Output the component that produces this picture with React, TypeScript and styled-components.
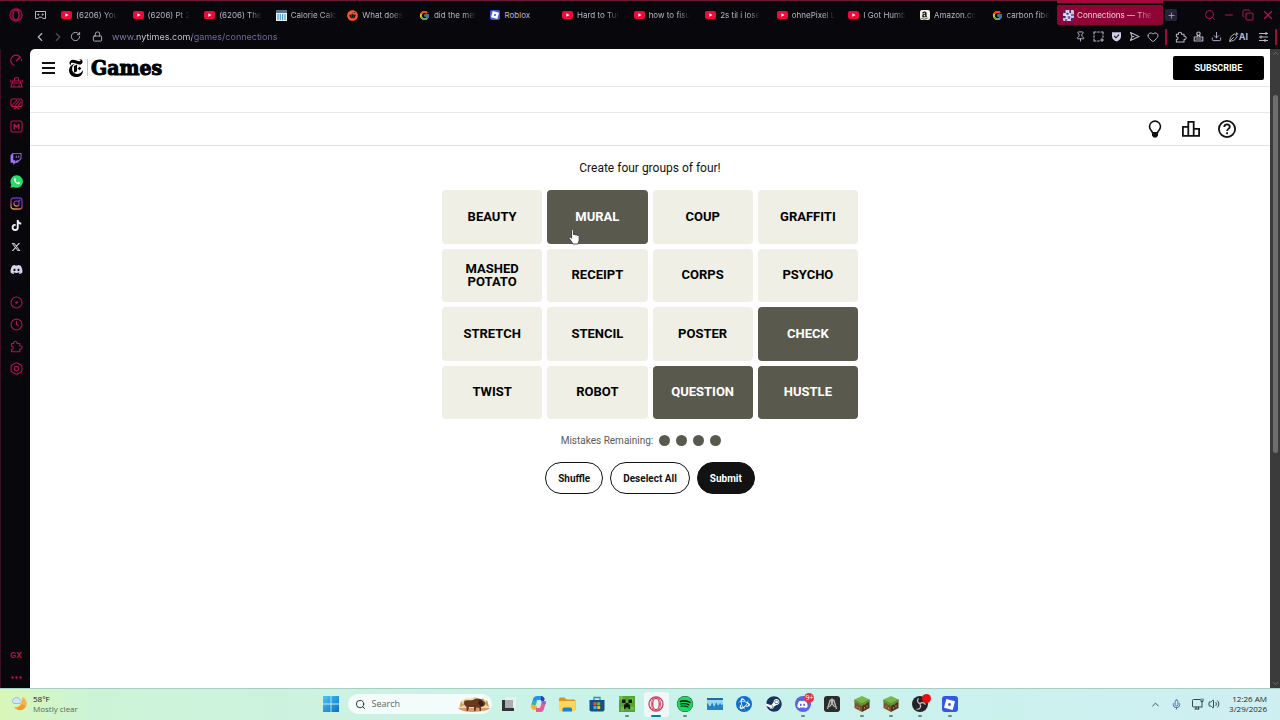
import React, { useState } from "react";
import styled, { createGlobalStyle, css } from "styled-components";
import { FaAmazon, FaReddit, FaTwitch, FaTiktok, FaDiscord, FaSpotify, FaSteam } from "react-icons/fa";
import { FaXTwitter } from "react-icons/fa6";
import { FcGoogle } from "react-icons/fc";
import { SiNewyorktimes, SiRoblox, SiBattledotnet } from "react-icons/si";
import {
  ChevronLeft, ChevronRight, ChevronUp, ChevronDown, Clock, Copy, Download, Heart, Lock, Mic, Minus,
  Pin, Plus, RotateCw, Search, Volume2, X,
} from "lucide-react";

const crimson = "#b8124e";
const chromeText = "#b9b6c6";
const olive = "#5a594e";

const GlobalStyle = createGlobalStyle`
  * { box-sizing: border-box; }
  body { margin: 0; background: #fff; font-family: Inter, "Liberation Sans", sans-serif; }
  button, input { font: inherit; color: inherit; margin: 0; padding: 0; border: 0; background: none; outline: none; }
  button { cursor: pointer; }
  svg { display: block; flex: none; }
`;

const Desktop = styled.div`
  display: flex;
  flex-direction: column;
  min-height: 100vh;
`;

/* ---------- browser chrome ---------- */

const Browser = styled.div`
  flex: 1;
  display: flex;
  flex-direction: column;
  background: #07070c;
`;

const TabStrip = styled.div`
  display: flex;
  align-items: center;
  height: 25px;
  padding: 4px 7px 0 9px;
  border-top: 1px solid #6a1836;
  color: ${chromeText};
`;

const Workspace = styled.button`
  margin: 0 9px 0 12px;
`;

const Tabs = styled.div`
  flex: 1;
  min-width: 0;
  display: flex;
  height: 20px;
`;

const TabButton = styled.button<{ $active?: boolean }>`
  position: relative;
  flex: 1;
  min-width: 0;
  display: flex;
  align-items: center;
  gap: 4px;
  padding: 0 6px;
  font-size: 8px;
  line-height: 12px;
  text-align: left;
  ${(p) =>
    p.$active &&
    css`
      flex: 0 0 106px;
      gap: 3px;
      border-radius: 2px;
      background: #8e0434;
      color: #ecd6e0;
      &::before {
        content: "";
        position: absolute;
        left: 0;
        right: 0;
        top: -5px;
        height: 3px;
        background: #a5073f;
      }
    `}
`;

const TabTitle = styled.span<{ $fade: boolean }>`
  white-space: nowrap;
  mask-image: ${(p) => (p.$fade ? "linear-gradient(90deg, #000 72%, transparent)" : "none")};
`;

const NewTab = styled.button`
  display: grid;
  place-items: center;
  width: 12px;
  height: 12px;
  margin-left: 2px;
  border-radius: 2px;
  background: #25233a;
`;

const WindowButtons = styled.div`
  display: flex;
  gap: 7px;
  margin-left: 27px;
  color: ${crimson};
`;

const AddressBar = styled.div`
  display: flex;
  align-items: center;
  height: 24px;
  padding: 0 3px 1px 33px;
  color: ${chromeText};
`;

const NavButtons = styled.div`
  display: flex;
  align-items: center;
  gap: 6px;
`;

const ChromeButton = styled.button<{ $dim?: boolean }>`
  display: grid;
  place-items: center;
  width: 12px;
  height: 14px;
  opacity: ${(p) => (p.$dim ? 0.4 : 1)};
`;

const UrlBox = styled.div`
  flex: 1;
  min-width: 0;
  display: flex;
  align-items: center;
  gap: 9px;
  margin-left: 10px;
`;

const UrlInput = styled.input`
  flex: 1;
  min-width: 0;
  height: 16px;
  font-size: 9px;
  color: transparent;
  background: linear-gradient(90deg, #8680ab 0 24px, #cfccdd 24px 80px, #756ea6 80px);
  background-clip: text;
  -webkit-background-clip: text;
`;

const AddressActions = styled.div`
  display: flex;
  align-items: center;
  gap: 6px;
`;

const RedBar = styled.span<{ $spaced?: boolean }>`
  width: 2px;
  height: 16px;
  margin-right: ${(p) => (p.$spaced ? "2px" : "0")};
  background: #a5073f;
`;

const AiButton = styled.button`
  display: flex;
  align-items: center;
  margin-right: 3px;
  font-size: 9px;
  font-weight: 700;
`;

const BrowserBody = styled.div`
  flex: 1;
  display: flex;
`;

const Sidebar = styled.nav`
  width: 30px;
  display: flex;
  flex-direction: column;
  gap: 11px;
  border-left: 1px solid #35101f;
  padding-left: 1px;
  color: ${crimson};
`;

const SideGroup = styled.div<{ $bottom?: boolean }>`
  display: flex;
  flex-direction: column;
  margin-top: ${(p) => (p.$bottom ? "auto" : "0")};
`;

const SideButton = styled.button`
  display: grid;
  place-items: center;
  height: 22px;
  font-size: 8px;
  font-weight: 700;
`;

const ScrollTrack = styled.div`
  width: 10px;
  display: flex;
  flex-direction: column;
  align-items: center;
  background: #3b3b3b;
  color: #777;
`;

const ScrollSpace = styled.div<{ $share: number }>`
  flex: ${(p) => p.$share};
`;

const ScrollThumb = styled.div`
  flex: 357;
  width: 5px;
  border-radius: 3px;
  background: #6e6e6e;
`;

/* ---------- game page ---------- */

const Page = styled.div`
  flex: 1;
  min-width: 0;
  background: #fff;
  border-top-left-radius: 5px;
  color: #121212;
  font-family: Roboto, "Liberation Sans", sans-serif;
`;

const Header = styled.header`
  display: flex;
  align-items: center;
  height: 38px;
  padding: 0 6px 0 12px;
  border-bottom: 1px solid #e6e6e6;
`;

const MenuButton = styled.button`
  margin-right: 12px;
`;

const Brand = styled.a`
  display: flex;
  align-items: center;
  color: #000;
  text-decoration: none;
`;

const BrandRule = styled.span`
  width: 1px;
  height: 17px;
  margin: 0 3px 0 2px;
  background: #c4c4c4;
`;

const BrandName = styled.span`
  font-family: "DejaVu Serif Condensed", "DejaVu Serif", serif;
  font-size: 21px;
  line-height: 24px;
  font-weight: 700;
  -webkit-text-stroke: 1px #000;
`;

const Subscribe = styled.button`
  width: 91px;
  height: 24px;
  margin-left: auto;
  border-radius: 2px;
  background: #000;
  color: #fff;
  font-size: 9px;
  font-weight: 700;
`;

const Banner = styled.div`
  height: 26px;
  border-bottom: 1px solid #e6e6e6;
`;

const Toolbar = styled.div`
  display: flex;
  justify-content: flex-end;
  align-items: center;
  gap: 16px;
  height: 33px;
  padding-right: 33px;
  border-bottom: 1px solid #e3e3e3;
`;

const Game = styled.main`
  display: flex;
  flex-direction: column;
  align-items: center;
  padding: 14px 12px;
`;

const Prompt = styled.h1`
  margin: 0 0 14px;
  font-size: 12px;
  line-height: 16px;
  font-weight: 400;
`;

const Board = styled.div`
  display: grid;
  grid-template-columns: repeat(4, 1fr);
  grid-template-rows: repeat(4, 1fr);
  gap: 5px;
  width: 100%;
  max-width: 416px;
  height: 229px;
`;

const Tile = styled.button<{ $selected: boolean }>`
  position: relative;
  padding: 0 16px 1px;
  border-radius: 4px;
  background: ${(p) => (p.$selected ? olive : "#efefe6")};
  color: ${(p) => (p.$selected ? "#fff" : "#000")};
  font-size: 13px;
  line-height: 13px;
  font-weight: 700;
`;

const Pointer = styled.svg`
  position: absolute;
  left: 21px;
  bottom: -1px;
`;

const Mistakes = styled.div`
  display: flex;
  align-items: center;
  gap: 6px;
  height: 16px;
  margin: 13px 0 14px;
  padding-right: 18px;
  color: #5a5a5a;
  font-size: 10px;
`;

const Dot = styled.span`
  width: 11px;
  height: 11px;
  border-radius: 50%;
  background: ${olive};
`;

const Actions = styled.div`
  display: flex;
  gap: 7px;
`;

const Pill = styled.button<{ $solid?: boolean }>`
  height: 32px;
  padding: 0 12px;
  border: 1px solid #121212;
  border-radius: 16px;
  background: ${(p) => (p.$solid ? "#121212" : "#fff")};
  color: ${(p) => (p.$solid ? "#fff" : "#121212")};
  font-size: 10px;
  font-weight: 700;
`;

/* ---------- taskbar ---------- */

const Taskbar = styled.footer`
  display: flex;
  align-items: center;
  height: 32px;
  padding-bottom: 1px;
  border-top: 1px solid #a9cdc2;
  background: linear-gradient(90deg, #d8f7b8 0, #cdf3d6 7%, #ccf2e0 24%, #c9f2ea 50%, #cbf1ee 80%, #cfeef2 100%);
  color: #1f2a2a;
  font-family: "Open Sans", "Noto Sans", sans-serif;
  font-size: 8px;
  line-height: 10px;
`;

const Side = styled.div<{ $end?: boolean }>`
  flex: 1;
  display: flex;
  align-items: center;
  justify-content: ${(p) => (p.$end ? "flex-end" : "flex-start")};
  gap: 5px;
  padding: 0 13px 0 11px;
`;

const Forecast = styled.div`
  color: #4f6b5a;
`;

const Strong = styled.div`
  color: #17211c;
`;

const Center = styled.div`
  display: flex;
  align-items: center;
  padding-left: 7px;
`;

const SearchBox = styled.label`
  display: flex;
  align-items: center;
  width: 144px;
  height: 20px;
  margin: 0 3px 0 9px;
  padding: 0 2px 0 7px;
  gap: 6px;
  border-radius: 10px;
  background: #f3fcfb;
`;

const SearchInput = styled.input`
  flex: 1;
  min-width: 0;
  font-size: 9px;
  &::placeholder { color: #5c6666; opacity: 1; }
`;

const Apps = styled.div`
  display: grid;
  grid-template-columns: repeat(16, 1fr);
  width: 470px;
`;

const AppButton = styled.button<{ $open?: boolean; $focused?: boolean }>`
  position: relative;
  display: grid;
  place-items: center;
  width: 25px;
  height: 25px;
  justify-self: center;
  border-radius: 3px;
  background: ${(p) => (p.$focused ? "#edf9f8" : "none")};
  &::after {
    content: "";
    display: ${(p) => (p.$open || p.$focused ? "block" : "none")};
    position: absolute;
    bottom: 0;
    width: ${(p) => (p.$focused ? "10px" : "4px")};
    height: 2px;
    border-radius: 1px;
    background: ${(p) => (p.$focused ? "#0a78b5" : "#6f8787")};
  }
`;

const Round = styled.span<{ $bg: string; $square?: boolean }>`
  display: grid;
  place-items: center;
  width: 16px;
  height: 16px;
  border-radius: ${(p) => (p.$square ? "3px" : "50%")};
  background: ${(p) => p.$bg};
  color: #fff;
`;

const Favicon = styled(Round)`
  flex: none;
  width: 10px;
  height: 10px;
  border-radius: 2px;
`;

const Badge = styled.span`
  position: absolute;
  top: 1px;
  right: 1px;
  width: 10px;
  height: 10px;
  border-radius: 5px;
  background: #dc3545;
  color: #fff;
  font-size: 7px;
  line-height: 10px;
  text-align: center;
`;

const RecordDot = styled.span`
  position: absolute;
  top: 2px;
  right: 2px;
  width: 9px;
  height: 9px;
  border-radius: 50%;
  background: #ee0a12;
`;

const Tray = styled.div`
  display: flex;
  align-items: center;
  gap: 4px;
  margin-right: 4px;
  color: #33474c;
`;

const TrayButton = styled.button<{ $wide?: boolean }>`
  margin-right: ${(p) => (p.$wide ? "6px" : "0")};
`;

const ClockText = styled.div`
  text-align: right;
`;

/* ---------- drawings ---------- */

const OperaRing = ({ size = 14, stroke = crimson }: { size?: number; stroke?: string }) => (
  <svg width={size} height={size} viewBox="0 0 16 16" fill="none" stroke={stroke} strokeWidth="1.3">
    <circle cx="8" cy="8" r="7" />
    <ellipse cx="8" cy="8" rx="3.3" ry="5.6" />
    <path d="M6 1.6C2.600 4.400 2.600 11.600 6 14.400M10 1.600c3.400 2.800 3.400 10 0 12.800" strokeWidth="0.8" />
  </svg>
);

const YouTubeMark = () => (
  <svg width="11" height="8" viewBox="0 0 11 8">
    <rect width="11" height="8" rx="2" fill="#f0083c" />
    <path d="M4.300 2.200v3.600l3.200-1.800z" fill="#fff" />
  </svg>
);

const CalculatorMark = () => (
  <svg width="11" height="11" viewBox="0 0 11 11">
    <rect width="11" height="11" fill="#e9f2f8" />
    <rect width="11" height="3" fill="#5b7386" />
    <path d="M2 4v6M4.300 4v6M6.600 4v6M9 4v6" stroke="#4a96cb" strokeWidth="1.100" />
  </svg>
);

const ConnectionsMark = () => (
  <svg width="11" height="11" viewBox="0 0 11 11">
    <rect width="11" height="11" rx="1" fill="#c7bfe8" />
    <path d="M0 0h3v3H0zM6 0h2v3H6zM3 3h3v2H3zM8 4h3v2H8zM0 6h3v2H0zM5 6h2v3H5zM8 8h3v3H8zM2 9h2v2H2z" fill="#4b2a73" />
    <path d="M3 0v11M6 0v11M0 5h11" stroke="#fff" strokeWidth="0.600" />
  </svg>
);

const WorkspaceIcon = () => (
  <svg width="11" height="9" viewBox="0 0 11 9" fill="none" stroke="currentColor" strokeWidth="1">
    <path d="M.5.5h10v7H7.800L6.800 6.200H4.200L3.200 7.500H.5z" />
    <circle cx="3.300" cy="3.600" r=".6" fill="currentColor" />
    <circle cx="7.700" cy="3.600" r=".6" fill="currentColor" />
  </svg>
);

const line = { fill: "none", stroke: "currentColor", strokeWidth: 1.1, strokeLinejoin: "round", strokeLinecap: "round" } as const;

const SnapshotIcon = () => (
  <svg width="11" height="11" viewBox="0 0 11 11" {...line}>
    <path d="M1 3V1h2M4.700 1h1.600M8 1h2v2M10 4.700v1.600M1 4.700v1.600M1 8v2h2M4.700 10h1.600M9 7.500v3M7.500 9h3" />
  </svg>
);

const ShieldIcon = () => (
  <svg width="11" height="11" viewBox="0 0 11 11">
    <path d="M1 1.200h9v4.300c0 2.500-2 4-4.500 5C3 9.500 1 8 1 5.500z" fill="#d0cce4" />
    <path d="m3.300 5 1.700 1.800 3-3.200" fill="none" stroke="#15131f" strokeWidth="1.100" />
  </svg>
);

const SendIcon = () => (
  <svg width="11" height="11" viewBox="0 0 11 11" {...line}>
    <path d="M1.500 1.500 10 5.500l-8.500 4L3 5.500zM3 5.500h2" />
  </svg>
);

const PuzzleIcon = ({ size = 12 }: { size?: number }) => (
  <svg width={size} height={size} viewBox="0 0 13 13" {...line}>
    <path d="M1.500 3.500h2.300c-.7-3 3.900-3 3.200 0h2.800v2.300c3-.7 3 3.900 0 3.200v2.800H1.500V9.300c2.300.3 2.300-3.300 0-3z" />
  </svg>
);

const HexNutIcon = () => (
  <svg width="13" height="13" viewBox="0 0 13 13" {...line}>
    <path d="M5 1.300q1.500-1 3 0l3 1.700q.9.600.9 1.600v3.800q0 1-.9 1.600l-3 1.700q-1.500 1-3 0L2 10q-.9-.6-.9-1.600V4.600Q1.100 3.600 2 3z" />
    <circle cx="6.500" cy="6.500" r="2.200" />
  </svg>
);

const StampIcon = () => (
  <svg width="11" height="11" viewBox="0 0 11 11" {...line}>
    <circle cx="5.500" cy="2.700" r="1.700" />
    <path d="M4.500 4.300 4 6h3l-.5-1.700M1.200 6h8.600v4H1.200zM3 8h5" />
  </svg>
);

const MixerIcon = () => (
  <svg width="11" height="10" viewBox="0 0 11 10" {...line} strokeLinecap="butt">
    <path d="M1 1.500h9M1 5h9M1 8.500h9M8 0v3M3 3.500v3M7 7v3" />
  </svg>
);

const AiPen = () => (
  <svg width="10" height="10" viewBox="0 0 11 11" {...line}>
    <path d="M1 10c0-3 .5-5 2.500-6L6 2l3 3-2 2.500C6 9.500 4 10 1 10zM1 10l4-4M8.500 .8v2M9.800 2.200l-2-.2" />
  </svg>
);

const GaugeIcon = () => (
  <svg width="13" height="13" viewBox="0 0 13 13" {...line}>
    <path d="M10.300 3.200A5.300 5.300 0 1 0 4 11.300M11.300 5.200a5.300 5.300 0 0 1 .3 1.500" />
    <path d="M6.500 6.800 10 3.400" strokeWidth="1.500" />
  </svg>
);

const CleanerIcon = () => (
  <svg width="13" height="13" viewBox="0 0 13 13" {...line}>
    <path d="M4.500 5V2.500c0-1.300 4-1.300 4 0V5M2.500 5h8v2h-8zM2 7.500 1 11h11l-1-3.500M4 11V9M9 11V9M.8 4v2M12.200 4v2" />
  </svg>
);

const MonitorIcon = () => (
  <svg width="13" height="12" viewBox="0 0 13 12" {...line}>
    <rect x="1" y="1" width="11" height="7.500" rx="1" />
    <path d="M2 7.500 7 2M5 7.500 10 2M8 7.500 11 4M4 11l2.500-1.800L9 11" />
  </svg>
);

const ModsIcon = () => (
  <svg width="13" height="13" viewBox="0 0 13 13" {...line}>
    <rect x="1" y="1" width="11" height="11" rx="1.500" />
    <path d="M4.200 8.800v-4.300l2.300 2.500 2.300-2.500v4.300" strokeWidth="1.500" />
  </svg>
);

const PlayerIcon = () => (
  <svg width="13" height="13" viewBox="0 0 13 13" {...line}>
    <circle cx="6.500" cy="6.500" r="5.500" />
    <circle cx="6.500" cy="6.500" r=".8" fill="currentColor" />
  </svg>
);

const WhatsAppMark = () => (
  <svg width="13" height="13" viewBox="0 0 13 13">
    <path d="M6.700.3a6.200 6.200 0 1 1-3 11.600L.4 12.700l.9-3.100A6.200 6.200 0 0 1 6.700.3z" fill="#25df68" />
    <path d="M4.300 3.300c-1.200 1.500.2 3.400 1.500 4.600 1.400 1.200 3.100 1.900 4.100.6l.1-.9-1.500-.8-.9.9C6.400 7.200 5.800 6.400 5.500 5.700l.6-.9-.6-1.600z" fill="#fff" />
  </svg>
);

const InstagramMark = () => (
  <svg width="13" height="13" viewBox="0 0 13 13" fill="none" stroke="url(#ig)" strokeWidth="1.300">
    <defs>
      <linearGradient id="ig" x1="0.700" y1="0" x2="0.300" y2="1">
        <stop offset="0" stopColor="#5b34c9" />
        <stop offset="0.550" stopColor="#a32588" />
        <stop offset="1" stopColor="#e0a43a" />
      </linearGradient>
    </defs>
    <rect x="1" y="1" width="11" height="11" rx="2.500" />
    <circle cx="6.500" cy="6.500" r="2.600" />
    <circle cx="9.600" cy="3.400" r=".3" />
  </svg>
);

const DotsIcon = () => (
  <svg width="11" height="3" viewBox="0 0 11 3" fill="currentColor">
    <circle cx="1.500" cy="1.500" r="1.200" />
    <circle cx="5.500" cy="1.500" r="1.200" />
    <circle cx="9.500" cy="1.500" r="1.200" />
  </svg>
);

const BurgerIcon = () => (
  <svg width="13" height="12" viewBox="0 0 13 12">
    <path d="M0 1h13M0 6h13M0 11h13" stroke="#111" strokeWidth="2" />
  </svg>
);

const BulbIcon = () => (
  <svg width="20" height="20" viewBox="0 0 20 20">
    <path d="M7.500 13.800C7.300 12 4.500 11 4.500 7.600a5.500 5.500 0 0 1 11 0c0 3.400-2.800 4.400-3 6.200z" fill="none" stroke="#111" strokeWidth="1.600" />
    <path d="M7 13.200h6v3.300l-1.500 1.900h-3L7 16.500z" fill="#111" />
  </svg>
);

const StatsIcon = () => (
  <svg width="20" height="20" viewBox="0 0 20 20" fill="none" stroke="#111" strokeWidth="1.800">
    <path d="M1.900 7.900h5.400v9H1.900zM7.300 2.900h5.400v14H7.300zM12.700 9.900h5.400v7h-5.400z" />
  </svg>
);

const HelpIcon = () => (
  <svg width="20" height="20" viewBox="0 0 20 20" fill="none" stroke="#111" strokeWidth="1.800">
    <circle cx="10" cy="10" r="8.100" />
    <path d="M7.300 8.100c0-3.700 5.500-3.500 5.500-.3 0 2-2.700 2.200-2.700 4.300M10.100 13.300v1.900" />
  </svg>
);

const HandPointer = () => (
  <Pointer width="13" height="16" viewBox="0 0 13 16" aria-hidden="true">
    <path
      d="M3.600 1.700c0-1.500 2-1.500 2 0v4.100c.3-.8 1.800-.7 1.900.3.400-.7 1.700-.5 1.800.5.500-.6 1.900-.4 1.900.8v3.200c0 1.600-.9 2.300-1 4.400H4.700C4.300 13 2.600 11.600 1.300 9.400c-.7-1.200.8-1.900 1.500-1l.8.9z"
      fill="#fff"
      stroke="#222"
      strokeWidth="0.800"
    />
  </Pointer>
);

const WeatherIcon = () => (
  <svg width="17" height="16" viewBox="0 0 17 16">
    <path d="M11.500 1.200A6.800 6.800 0 1 1 3 11c4.500 1.500 9-3 8.500-9.800z" fill="#f39a2b" />
    <path d="M11.500 1.200c3.600 1.900 4.600 5.500 3.200 9-1.500-1-3-1.500-4-2.500 1-2 1.100-4 .8-6.500z" fill="#f9b544" />
    <path d="M3 7.500a2.300 2.300 0 0 1 0-4.400 3 3 0 0 1 5.600.5 2 2 0 0 1 .4 3.900z" fill="#d3e4f8" stroke="#87a9dd" strokeWidth=".7" />
  </svg>
);

const WindowsMark = () => (
  <svg width="16" height="16" viewBox="0 0 16 16">
    <defs>
      <linearGradient id="win" x1="0" y1="0" x2="1" y2="1">
        <stop offset="0" stopColor="#4fc5f4" />
        <stop offset="1" stopColor="#0b6fc6" />
      </linearGradient>
    </defs>
    <path d="M0 0h7.600v7.600H0zM8.400 0H16v7.600H8.400zM0 8.400h7.600V16H0zM8.400 8.400H16V16H8.400z" fill="url(#win)" />
  </svg>
);

const BisonArt = () => (
  <svg width="32" height="17" viewBox="0 0 32 17">
    <path d="M1 12c0-3 1-6 4-8 3-3 8 0 11-3 4 0 5 3 9 3 4-2 5 3 6 8z" fill="#eadba8" />
    <path d="M2 11l1-6 2 4 2-6 2 5M22 5l3-3 2 5 2-3 2 7" fill="#c89a4c" />
    <path d="M0 12h32c-2 3-8 3-16 4-8 0-13-1-16-4z" fill="#d89b6c" />
    <path d="M6 6c2-3 6-1 9-2 3-2 8-2 10 1 2 0 3 3 1 5l-3 1v4h-1.500v-3l-3-.5-1 3.500H16v-4H11l-1 4H8.500V11C6 9 6 8 6 6z" fill="#69391f" />
    <path d="M21 4c3 0 5 3 4 6-2 1-4-1-5-3z" fill="#3e2015" />
  </svg>
);

const TaskViewIcon = () => (
  <svg width="14" height="14" viewBox="0 0 14 14">
    <path d="M3 0h11v11H3z" fill="#eceeee" />
    <path d="M0 3h3v8h9v3H0z" fill="#303436" />
    <path d="M3 3h8v8H3z" fill="#a8adaf" />
  </svg>
);

const CopilotMark = () => (
  <svg width="17" height="16" viewBox="0 0 17 16" fill="none" strokeWidth="4" strokeLinejoin="round">
    <path d="M3 10 5 3.500Q5.500 2 7.500 2H11" stroke="#2594e8" />
    <path d="M3 8.500Q2 12 5 12h2" stroke="#f3b32c" />
    <path d="M11 2q1.500 0 2 2h1" stroke="#293fba" />
    <path d="M14 5.500 12 12.500Q11.500 14 9.500 14H6" stroke="#e95a9c" />
    <path d="M14.300 5 13.500 8" stroke="#a857dc" />
    <path d="M4 8.500 5 5" stroke="#2dbd9c" />
  </svg>
);

const FolderMark = () => (
  <svg width="17" height="15" viewBox="0 0 17 15">
    <path d="M0 2q0-1.500 1.500-1.500h4L7.500 2.500H15q1.500 0 1.500 1.500v9H0z" fill="#d69420" />
    <path d="M0 4h16.500v9q0 1.500-1.500 1.500H1.500Q0 14.500 0 13z" fill="#ffd65a" />
    <path d="M3.500 14.500V12q0-1.500 1.500-1.500h6.500q1.500 0 1.500 1.500v2.500z" fill="#1b84cc" />
  </svg>
);

const StoreMark = () => (
  <svg width="16" height="16" viewBox="0 0 16 16">
    <path d="M5 4V1.500h6V4" fill="none" stroke="#2c8cd0" strokeWidth="1.300" />
    <path d="M.5 4h15v9.500q0 2-2 2h-11q-2 0-2-2z" fill="#164f87" />
    <path d="M4.500 6.300h3v3h-3z" fill="#f35325" />
    <path d="M8.200 6.300h3v3h-3z" fill="#81bc06" />
    <path d="M4.500 10h3v3h-3z" fill="#36b5f0" />
    <path d="M8.200 10h3v3h-3z" fill="#ffba08" />
  </svg>
);

const CreeperMark = () => (
  <svg width="16" height="16" viewBox="0 0 16 16">
    <path d="M0 0h16v16H0z" fill="#55a532" />
    <path d="M0 0h4v4H0zM10 2h4v3h-4zM2 11h3v4H2zM12 11h3v3h-3z" fill="#6dc043" />
    <path d="M3 3.500h3.500V7h3V3.500H13V7H9.500v1.500H11V13H9.500v-1.500h-3V13H5V8.500h1.500V7H3z" fill="#10150d" />
  </svg>
);

const GrassBlock = () => (
  <svg width="16" height="16" viewBox="0 0 16 16">
    <path d="M8 0l7.500 3.500L8 7.500.5 3.500z" fill="#78b84a" />
    <path d="M.5 3.500 8 7.500V16L.5 12z" fill="#7d5434" />
    <path d="M15.500 3.500 8 7.500V16l7.500-4z" fill="#51341f" />
    <path d="M.5 3.500 8 7.500v2.600L6.500 8.500 5 9 3.500 7 2 7.300.5 6zM15.500 3.500 8 7.500v2.600L10 8.500l1.500.2 1.500-2 2.500-.7z" fill="#5b9a35" />
    <path d="M3 10v2M5.500 11v2.500M10.500 11v2M13 9v2.500" stroke="#a97a51" strokeWidth="1" />
  </svg>
);

const WaveApp = () => (
  <svg width="16" height="12" viewBox="0 0 16 12">
    <path d="M0 0h16v12H0z" fill="#2483c4" />
    <path d="M0 0h16v6l-1.500 1.500Q13.500 4 12.500 6t-2 1Q9.500 2.500 8.500 6T6.500 8Q5.500 3 4.500 6T2 7.500Q1 5 0 5z" fill="#9bd8ee" />
    <path d="M0 0h16v2H0z" fill="#256ba7" />
  </svg>
);

const ArchApp = () => (
  <svg width="12" height="12" viewBox="0 0 12 12" fill="none" stroke="#b9b9b9" strokeWidth="1.300">
    <path d="M1.500 11 4 2.500 5.500 1.500V7M10.500 11 8 2.500 6.500 1.500V7M3.500 9 5.500 6M8.500 9l-2-3" />
  </svg>
);

const ObsMark = () => (
  <svg width="16" height="16" viewBox="0 0 16 16" fill="none" stroke="#c4c4c8" strokeWidth="1.200" strokeLinecap="round">
    <path d="M6.200 2.700a3.100 3.100 0 0 0 1.900 5M13.200 8.300a3.100 3.100 0 0 0-5.200-.4M5 13.200a3.100 3.100 0 0 0 2.900-5" />
  </svg>
);

const NetworkIcon = () => (
  <svg width="12" height="12" viewBox="0 0 12 12" {...line} strokeWidth="1">
    <path d="M8 1.500H1.500Q.5 1.500.5 2.500V8q0 1 1 1h8M4 9v2M3 11h4M6.500 9v2M9 1v2.500h2V1M10 3.500V9" />
  </svg>
);

/* ---------- data ---------- */

const youtube = <YouTubeMark />;
const google = <FcGoogle size={11} />;

const tabs: { title: string; icon: React.ReactNode }[] = [
  { title: "(6206) You", icon: youtube },
  { title: "(6206) Pt 2", icon: youtube },
  { title: "(6206) The", icon: youtube },
  { title: "Calorie Calc", icon: <CalculatorMark /> },
  { title: "What does", icon: <FaReddit size={11} color="#ff5722" /> },
  { title: "did the met", icon: google },
  { title: "Roblox", icon: <Favicon $bg="#3b55e0"><SiRoblox size={8} /></Favicon> },
  { title: "Hard to Tur", icon: youtube },
  { title: "how to fisu", icon: youtube },
  { title: "2s til i lose", icon: youtube },
  { title: "ohnePixel L", icon: youtube },
  { title: "I Got Humb", icon: youtube },
  { title: "Amazon.co", icon: <Favicon $bg="#f4f2e4"><FaAmazon size={9} color="#181818" /></Favicon> },
  { title: "carbon fibe", icon: google },
];

const sideTools: [string, React.ReactNode][] = [
  ["GX Control", <GaugeIcon />],
  ["GX Cleaner", <CleanerIcon />],
  ["Live wallpaper", <MonitorIcon />],
  ["Mods", <ModsIcon />],
];

const sideApps: [string, React.ReactNode][] = [
  ["Twitch", <FaTwitch size={12} color="#a374f5" />],
  ["WhatsApp", <WhatsAppMark />],
  ["Instagram", <InstagramMark />],
  ["TikTok", <FaTiktok size={11} color="#f0eef5" />],
  ["X", <FaXTwitter size={10} color="#dedce6" />],
  ["Discord", <FaDiscord size={13} color="#d6d3ee" />],
];

const sidePanels: [string, React.ReactNode][] = [
  ["Player", <PlayerIcon />],
  ["History", <Clock size={13} strokeWidth={2} />],
  ["Extensions", <PuzzleIcon size={13} />],
  ["Settings", <HexNutIcon />],
];

const words = [
  "BEAUTY", "MURAL", "COUP", "GRAFFITI",
  "MASHED POTATO", "RECEIPT", "CORPS", "PSYCHO",
  "STRETCH", "STENCIL", "POSTER", "CHECK",
  "TWIST", "ROBOT", "QUESTION", "HUSTLE",
];

const SideItems = ({ items }: { items: [string, React.ReactNode][] }) => (
  <SideGroup>
    {items.map(([name, icon]) => (
      <SideButton key={name} aria-label={name}>{icon}</SideButton>
    ))}
  </SideGroup>
);

export default function App() {
  const [selected, setSelected] = useState(["MURAL", "CHECK", "QUESTION", "HUSTLE"]);
  const toggle = (word: string) =>
    setSelected((now) =>
      now.includes(word) ? now.filter((w) => w !== word) : now.length < 4 ? [...now, word] : now
    );

  return (
    <Desktop>
      <GlobalStyle />
      <Browser>
        <TabStrip>
          <OperaRing />
          <Workspace aria-label="Workspaces"><WorkspaceIcon /></Workspace>
          <Tabs>
            {tabs.map((tab) => (
              <TabButton key={tab.title}>
                {tab.icon}
                <TabTitle $fade={tab.title !== "Roblox"}>{tab.title}</TabTitle>
              </TabButton>
            ))}
            <TabButton $active>
              <ConnectionsMark />
              <TabTitle $fade>Connections — The I</TabTitle>
            </TabButton>
          </Tabs>
          <NewTab aria-label="New tab"><Plus size={9} /></NewTab>
          <WindowButtons>
            <ChromeButton aria-label="Search tabs"><Search size={12} /></ChromeButton>
            <ChromeButton aria-label="Minimize"><Minus size={12} /></ChromeButton>
            <ChromeButton aria-label="Restore"><Copy size={12} transform="scale(-1 1) rotate(90)" /></ChromeButton>
            <ChromeButton aria-label="Close"><X size={14} /></ChromeButton>
          </WindowButtons>
        </TabStrip>
        <AddressBar>
          <NavButtons>
            <ChromeButton aria-label="Back"><ChevronLeft size={14} /></ChromeButton>
            <ChromeButton aria-label="Forward" $dim><ChevronRight size={14} /></ChromeButton>
            <ChromeButton aria-label="Reload"><RotateCw size={11} /></ChromeButton>
          </NavButtons>
          <UrlBox>
            <ChromeButton aria-label="Site information"><Lock size={11} /></ChromeButton>
            <UrlInput aria-label="Address" defaultValue="www.nytimes.com/games/connections" />
          </UrlBox>
          <AddressActions>
            <ChromeButton aria-label="Pin"><Pin size={11} /></ChromeButton>
            <ChromeButton aria-label="Snapshot"><SnapshotIcon /></ChromeButton>
            <ChromeButton aria-label="Ad blocker"><ShieldIcon /></ChromeButton>
            <ChromeButton aria-label="Share"><SendIcon /></ChromeButton>
            <ChromeButton aria-label="Bookmark"><Heart size={12} /></ChromeButton>
            <RedBar $spaced />
            <ChromeButton aria-label="Extensions"><PuzzleIcon /></ChromeButton>
            <ChromeButton aria-label="Stamp"><StampIcon /></ChromeButton>
            <ChromeButton aria-label="Downloads"><Download size={11} /></ChromeButton>
            <AiButton><AiPen />AI</AiButton>
            <ChromeButton aria-label="Easy setup"><MixerIcon /></ChromeButton>
            <RedBar />
          </AddressActions>
        </AddressBar>
        <BrowserBody>
          <Sidebar aria-label="Sidebar">
            <SideItems items={sideTools} />
            <SideItems items={sideApps} />
            <SideItems items={sidePanels} />
            <SideGroup $bottom>
              <SideButton>GX</SideButton>
              <SideButton aria-label="More"><DotsIcon /></SideButton>
            </SideGroup>
          </Sidebar>
          <Page>
            <Header>
              <MenuButton aria-label="Menu"><BurgerIcon /></MenuButton>
              <Brand href="#games">
                <SiNewyorktimes size={18} />
                <BrandRule />
                <BrandName>Games</BrandName>
              </Brand>
              <Subscribe>SUBSCRIBE</Subscribe>
            </Header>
            <Banner />
            <Toolbar>
              <button aria-label="Hints"><BulbIcon /></button>
              <button aria-label="Statistics"><StatsIcon /></button>
              <button aria-label="Help"><HelpIcon /></button>
            </Toolbar>
            <Game>
              <Prompt>Create four groups of four!</Prompt>
              <Board>
                {words.map((word) => (
                  <Tile
                    key={word}
                    $selected={selected.includes(word)}
                    aria-pressed={selected.includes(word)}
                    onClick={() => toggle(word)}
                  >
                    {word}
                    {word === "MURAL" && <HandPointer />}
                  </Tile>
                ))}
              </Board>
              <Mistakes>
                <span>Mistakes Remaining:</span>
                <Dot /><Dot /><Dot /><Dot />
              </Mistakes>
              <Actions>
                <Pill>Shuffle</Pill>
                <Pill onClick={() => setSelected([])}>Deselect All</Pill>
                <Pill $solid>Submit</Pill>
              </Actions>
            </Game>
          </Page>
          <ScrollTrack>
            <ChevronUp size={9} />
            <ScrollSpace $share={37} />
            <ScrollThumb />
            <ScrollSpace $share={225} />
            <ChevronDown size={9} />
          </ScrollTrack>
        </BrowserBody>
      </Browser>
      <Taskbar>
        <Side>
          <WeatherIcon />
          <Forecast>
            <Strong>58°F</Strong>
            Mostly clear
          </Forecast>
        </Side>
        <Center>
          <button aria-label="Start"><WindowsMark /></button>
          <SearchBox>
            <Search size={11} />
            <SearchInput aria-label="Search" placeholder="Search" />
            <BisonArt />
          </SearchBox>
          <Apps>
            <AppButton aria-label="Task view"><TaskViewIcon /></AppButton>
            <AppButton aria-label="Copilot"><CopilotMark /></AppButton>
            <AppButton aria-label="File Explorer"><FolderMark /></AppButton>
            <AppButton aria-label="Store"><StoreMark /></AppButton>
            <AppButton aria-label="Minecraft Launcher" $open><CreeperMark /></AppButton>
            <AppButton aria-label="Opera GX" $focused><OperaRing size={16} stroke="#d63a5e" /></AppButton>
            <AppButton aria-label="Spotify" $open><Round $bg="#111"><FaSpotify size={16} color="#1ed75f" /></Round></AppButton>
            <AppButton aria-label="Wallpaper"><WaveApp /></AppButton>
            <AppButton aria-label="Battle.net"><Round $bg="#0e6fce"><SiBattledotnet size={12} /></Round></AppButton>
            <AppButton aria-label="Steam"><Round $bg="#fff"><FaSteam size={16} color="#12365c" /></Round></AppButton>
            <AppButton aria-label="Discord" $open>
              <Round $bg="#5865e8"><FaDiscord size={11} /></Round>
              <Badge>9+</Badge>
            </AppButton>
            <AppButton aria-label="Arch"><Round $bg="#2b2c2e" $square><ArchApp /></Round></AppButton>
            <AppButton aria-label="Minecraft" $open><GrassBlock /></AppButton>
            <AppButton aria-label="Minecraft server" $open><GrassBlock /></AppButton>
            <AppButton aria-label="OBS Studio" $open>
              <Round $bg="#232328"><ObsMark /></Round>
              <RecordDot />
            </AppButton>
            <AppButton aria-label="Roblox" $open><Round $bg="#3457e6" $square><SiRoblox size={11} /></Round></AppButton>
          </Apps>
        </Center>
        <Side $end>
          <Tray>
            <TrayButton aria-label="Hidden icons" $wide><ChevronUp size={11} /></TrayButton>
            <TrayButton aria-label="Microphone" $wide><Mic size={11} color="#3f67a0" /></TrayButton>
            <TrayButton aria-label="Network"><NetworkIcon /></TrayButton>
            <TrayButton aria-label="Volume"><Volume2 size={12} /></TrayButton>
          </Tray>
          <ClockText>
            <div>12:26 AM</div>
            <div>3/29/2026</div>
          </ClockText>
        </Side>
      </Taskbar>
    </Desktop>
  );
}
